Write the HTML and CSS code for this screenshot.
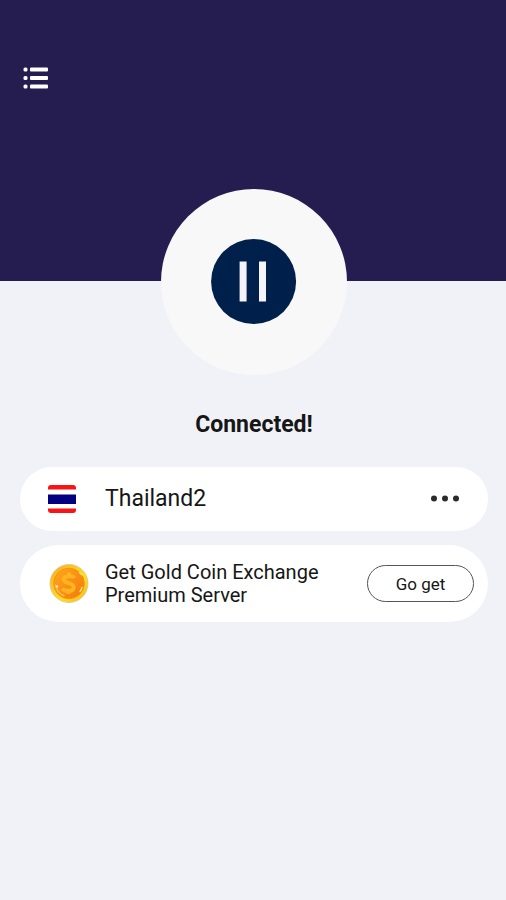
FILE: index.html
```html
<!DOCTYPE html>
<html lang="en">
<head>
<meta charset="utf-8">
<meta name="viewport" content="width=device-width, initial-scale=1">
<title>VPN</title>
<link rel="stylesheet" href="styles.css">
</head>
<body>
<header class="hero">
  <button class="icon-button menu" type="button" aria-label="Menu">
    <svg width="26" height="22" viewBox="0 0 26 22" fill="#fff" aria-hidden="true">
      <rect x="0.5" y="0.5" width="4" height="4" rx="1.5"/><rect x="7" y="0.5" width="18" height="4" rx="1"/>
      <rect x="0.5" y="9" width="4" height="4" rx="1.5"/><rect x="7" y="9" width="18" height="4" rx="1"/>
      <rect x="0.5" y="17.4" width="4" height="4" rx="1.5"/><rect x="7" y="17.4" width="18" height="4" rx="1"/>
    </svg>
  </button>
</header>
<main class="content">
  <button class="disc" type="button" aria-label="Disconnect">
    <svg width="86" height="86" viewBox="0 0 86 86" aria-hidden="true">
      <circle cx="42.600" cy="42.600" r="42.500" fill="#00204c"/>
      <path d="M28.600 22.500h7v40h-7zM48 22.500h7v40h-7z" fill="#f4f4fa"/>
    </svg>
  </button>
  <h1 class="status">Connected!</h1>
  <section class="card server">
    <svg class="flag" width="28" height="28" viewBox="0 0 28 28" aria-hidden="true">
      <path d="M0 4.500V3a3 3 0 0 1 3-3h22a3 3 0 0 1 3 3v1.500z" fill="#f81414"/>
      <path d="M0 9.500h28v9.500H0z" fill="#000080"/>
      <path d="M0 23.500h28v1.500a3 3 0 0 1-3 3H3a3 3 0 0 1-3-3z" fill="#f81414"/>
    </svg>
    <span class="name">Thailand2</span>
    <button class="icon-button" type="button" aria-label="Choose server">
      <svg width="30" height="8" viewBox="0 0 30 8" fill="#2b2b2b" aria-hidden="true">
        <circle cx="4" cy="3.500" r="3"/><circle cx="15" cy="3.500" r="3"/><circle cx="26" cy="3.500" r="3"/>
      </svg>
    </button>
  </section>
  <section class="card offer">
    <svg class="coin" width="40" height="40" viewBox="0 0 40 40" aria-hidden="true">
      <defs>
        <linearGradient id="rim" x1="0" y1="0" x2="1" y2="1">
          <stop offset="0" stop-color="#f5a923"/><stop offset=".3" stop-color="#ffc51c"/><stop offset=".6" stop-color="#ffe01c"/><stop offset="1" stop-color="#f4b51c"/>
        </linearGradient>
        <linearGradient id="face" x1="0" y1="0" x2="1" y2="1">
          <stop offset="0" stop-color="#ffa91c"/><stop offset="1" stop-color="#f4780e"/>
        </linearGradient>
      </defs>
      <circle cx="20" cy="19.500" r="19" fill="url(#rim)" stroke="#dcc09a" stroke-width=".8"/>
      <circle cx="20" cy="19.500" r="15.300" fill="url(#face)" stroke="#f2960f"/>
      <path d="M25.500 14c-1.500-2.400-10.500-3-10.800 1.300-.3 4.700 10.300 3 10 8-.3 4.600-9.200 4.400-11.500 1.300M20 8.500v3M19.500 26.500v3.500" fill="none" stroke="#ffb420" stroke-width="4"/>
      <path d="M6.500 21c1 5.500 4 9 8.500 10.800" fill="none" stroke="#ffb84e" stroke-width="1.500" stroke-linecap="round"/>
      <circle cx="8" cy="22.500" r="1.200" fill="#ffe9bd"/><path d="M31 27.500c1-1.200 1.600-2.400 2-4M30.500 8.500l2 2" fill="none" stroke="#ffe27a" stroke-width="1.500" stroke-linecap="round"/>
    </svg>
    <p class="pitch">Get Gold Coin Exchange Premium Server</p>
    <button class="go" type="button">Go get</button>
  </section>
</main>
</body>
</html>
```
FILE: styles.css
```css
* {
  box-sizing: border-box;
}

body {
  margin: 0;
  min-height: 100vh;
  background: #f0f2f8;
  color: #161616;
  font-family: Roboto, "Liberation Sans", sans-serif;
}

button {
  padding: 0;
  border: 0;
  background: none;
  color: inherit;
  font: inherit;
  cursor: pointer;
}

.hero {
  height: 281px;
  padding: 67px 23px 0;
  background: #251d50;
}

.icon-button {
  display: block;
}

.icon-button svg {
  display: block;
}

.content {
  display: flex;
  flex-direction: column;
  padding: 0 18px 24px 20px;
}

.disc {
  display: grid;
  place-items: center;
  align-self: center;
  width: 186px;
  height: 186px;
  margin-top: -92px;
  border-radius: 50%;
  background: #f8f8f8;
}

.status {
  margin: 36px 0 28px;
  font-size: 23px;
  line-height: 28px;
  font-weight: 700;
  text-align: center;
}

.card {
  display: flex;
  align-items: center;
  background: #fff;
  border-radius: 40px;
}

.server {
  min-height: 64px;
  padding: 0 28px;
}

.name {
  flex: 1;
  margin-left: 29px;
  font-size: 23px;
  line-height: 28px;
}

.offer {
  min-height: 77px;
  margin-top: 14px;
  padding: 0 14px 0 29px;
}

.coin {
  flex: none;
}

.pitch {
  flex: 1;
  margin: 0 40px 0 16px;
  font-size: 20px;
  line-height: 23px;
}

.go {
  flex: none;
  width: 107px;
  height: 37px;
  border: 1px solid #555;
  border-radius: 19px;
  font-size: 17px;
  line-height: 20px;
}
```
